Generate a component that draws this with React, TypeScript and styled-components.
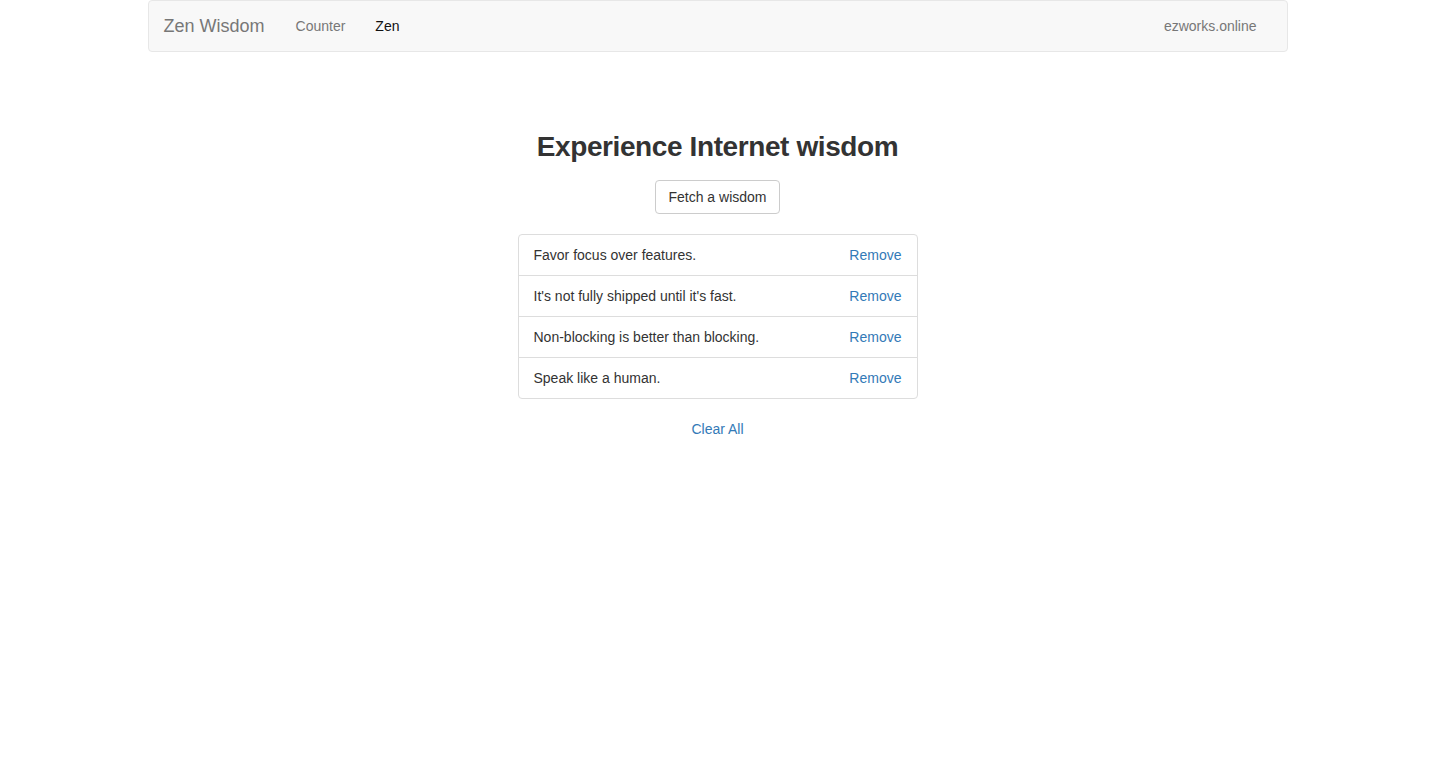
import * as React from 'react';
import styled, { createGlobalStyle } from 'styled-components';

const GlobalStyle = createGlobalStyle`
  html, body {
    margin: 0;
    padding: 0;
    background: #fff;
  }
  body {
    font-family: "Liberation Sans", Helvetica, Arial, sans-serif;
    font-size: 14px;
    line-height: 1.42857143;
    color: #333;
  }
  * {
    box-sizing: border-box;
  }
`;

const Container = styled.div`
  width: 1170px;
  margin: 0 auto;
  padding: 0 15px;
`;

const Navbar = styled.nav`
  display: flex;
  align-items: center;
  min-height: 52px;
  padding: 0 15px;
  margin-bottom: 20px;
  background-color: #f8f8f8;
  border: 1px solid #e7e7e7;
  border-radius: 4px;
`;

const Brand = styled.a`
  padding: 15px 16px 15px 0;
  font-size: 18px;
  line-height: 20px;
  color: #777;
  text-decoration: none;
`;

const NavList = styled.ul<{ $right?: boolean }>`
  display: flex;
  list-style: none;
  margin: 0 0 0 ${({ $right }) => ($right ? 'auto' : '0')};
  padding: 0;
`;

const NavItem = styled.a<{ $active?: boolean }>`
  display: block;
  padding: 15px;
  line-height: 20px;
  color: ${({ $active }) => ($active ? '#111' : '#777')};
  text-decoration: none;
`;

const Main = styled.main`
  display: flex;
  flex-direction: column;
  align-items: center;
`;

const Title = styled.h2`
  margin: 58px 0 17px;
  font-size: 28px;
  line-height: 33px;
  font-weight: 700;
  letter-spacing: -0.4px;
  color: #333;
`;

const Button = styled.button`
  padding: 6px 12px;
  font-family: inherit;
  font-size: 14px;
  line-height: 20px;
  color: #333;
  background-color: #fff;
  border: 1px solid #ccc;
  border-radius: 4px;
  cursor: pointer;
`;

const ListGroup = styled.ul`
  width: 400px;
  margin: 20px 0 20px;
  padding: 0;
  list-style: none;
`;

const ListGroupItem = styled.li`
  display: flex;
  justify-content: space-between;
  padding: 10px 15px;
  margin-bottom: -1px;
  border: 1px solid #ddd;
  background: #fff;

  &:first-child {
    border-top-left-radius: 4px;
    border-top-right-radius: 4px;
  }
  &:last-child {
    margin-bottom: 0;
    border-bottom-left-radius: 4px;
    border-bottom-right-radius: 4px;
  }
`;

const Link = styled.a`
  color: #337ab7;
  text-decoration: none;
  cursor: pointer;
`;

const wisdoms = [
  'Favor focus over features.',
  "It's not fully shipped until it's fast.",
  'Non-blocking is better than blocking.',
  'Speak like a human.',
];

export default function App() {
  return (
    <>
      <GlobalStyle />
      <Container>
        <Navbar>
          <Brand href="#">Zen Wisdom</Brand>
          <NavList>
            <li>
              <NavItem href="#">Counter</NavItem>
            </li>
            <li>
              <NavItem href="#" $active>
                Zen
              </NavItem>
            </li>
          </NavList>
          <NavList $right>
            <li>
              <NavItem href="#">ezworks.online</NavItem>
            </li>
          </NavList>
        </Navbar>
        <Main>
          <Title>Experience Internet wisdom</Title>
          <Button>Fetch a wisdom</Button>
          <ListGroup>
            {wisdoms.map((w) => (
              <ListGroupItem key={w}>
                <span>{w}</span>
                <Link>Remove</Link>
              </ListGroupItem>
            ))}
          </ListGroup>
          <Link>Clear All</Link>
        </Main>
      </Container>
    </>
  );
}
